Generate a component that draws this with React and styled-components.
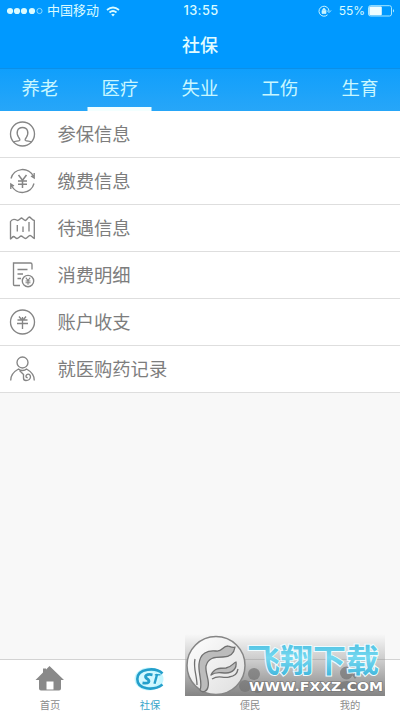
import React from "react";
import styled, { createGlobalStyle } from "styled-components";

const Global = createGlobalStyle`
  * { box-sizing: border-box; }
  body { margin: 0; background: #f8f8f8; font-family: "Liberation Sans", "Noto Sans CJK SC", sans-serif; }
`;
const Screen = styled.div`
  position: relative;
  width: 400px;
  height: 712px;
  display: flex;
  flex-direction: column;
  overflow: hidden;
  background: #f8f8f8;
`;
const Header = styled.header`
  height: 68px;
  background: #0099ff;
  color: #d9fbff;
`;
const StatusBar = styled.div`
  height: 22px;
  display: grid;
  grid-template-columns: 1fr auto 1fr;
  align-items: center;
  padding: 0 5px 0 7px;
  font-size: 12.5px;
  line-height: 22px;
`;
const Carrier = styled.div`
  display: flex;
  align-items: center;
  svg { display: block; }
  span { margin: 0 7px 0 4px; font-size: 13px; }
`;
const Clock = styled.div`
  font: 500 12.8px/22px Inter, sans-serif;
  letter-spacing: 0.4px;
`;
const Power = styled.div`
  display: flex;
  align-items: center;
  justify-content: flex-end;
  font: 400 12px/22px Inter, sans-serif;
  svg { display: block; }
  span { margin: 0 3px 0 7px; }
`;
const Title = styled.h1`
  margin: 0;
  height: 46px;
  text-align: center;
  font-size: 18px;
  font-weight: 500;
  line-height: 48px;
  color: #e2fcff;
`;
const Tabs = styled.nav`
  display: grid;
  grid-template-columns: repeat(5, 1fr);
  height: 43px;
  border-top: 1px solid #0b8fe8;
  background: linear-gradient(#109ffc, #27a6f8);
`;
const Tab = styled.div`
  display: flex;
  justify-content: center;
  color: #c9f7ff;
  font-size: 18.4px;
  line-height: 40px;
  &::after {
    content: "";
    align-self: flex-end;
    width: 64px;
    height: 4px;
    margin-left: -64px;
    transform: translateX(13.5px);
    background: ${(p) => (p.$active ? "#f2ffff" : "transparent")};
  }
`;
const List = styled.main`
  flex: 1;
`;
const Row = styled.div`
  height: 47px;
  display: flex;
  align-items: center;
  gap: 21.500px;
  padding-left: 9px;
  background: #fff;
  border-bottom: 1px solid #dedede;
  font-size: 18.3px;
  line-height: 46px;
  color: #7d7d7d;
  svg { width: 27px; height: 28px; flex: none; fill: none; stroke: #858585; stroke-width: 1.35; }
`;
const RowLabel = styled.span`
  padding-top: 1px;
`;
const Footer = styled.footer`
  height: 53px;
  display: grid;
  grid-template-columns: repeat(4, 1fr);
  border-top: 1px solid #d3d3d3;
  background: #fff;
`;
const NavItem = styled.div`
  display: flex;
  flex-direction: column;
  align-items: center;
  padding-top: 5px;
  font-size: 10.3px;
  line-height: 17px;
  color: ${(p) => (p.$active ? "#38a5c9" : "#8c8c8c")};
  svg { width: 32px; height: 32px; flex: none; overflow: visible; }
`;
const Watermark = styled.div`
  position: absolute;
  left: 185px;
  top: 634px;
  width: 200px;
  height: 62px;
  background: linear-gradient(rgba(180,180,180,0), rgba(150,150,150,.5) 45%, rgba(118,118,118,.9));
  svg { display: block; overflow: visible; }
`;

const Yen = ({ x = 13.5, y = 14, s = 1 }) => (
  <g transform={`translate(${x} ${y}) scale(${s})`}>
    <path d="M-4-6 0-.8 4-6M0-.8V7M-4.5 0h9M-4.5 3.2h9" />
  </g>
);
const icons = {
  person: (
    <svg viewBox="0 0 27 28">
      <circle cx="13.5" cy="14" r="12" />
      <path d="M4.500 22c1.500-1 4.500-.7 6-1.500.8-.5.2-1.600-.8-3-3-4.500-1.500-10 3.800-10s6.800 5.500 3.800 10c-1 1.400-1.600 2.500-.8 3 1.500.8 4.500.5 6 1.500" />
    </svg>
  ),
  cycle: (
    <svg viewBox="0 0 27 28">
      <path d="M2 11.500A12 12 0 0 1 24.500 9.500M25 16.500A12 12 0 0 1 2.500 18.500M25.200 6v5l-3.200-2M1.800 22v-5l3.200 2" />
      <g strokeWidth="1.500"><Yen /></g>
    </svg>
  ),
  map: (
    <svg viewBox="0 0 27 28">
      <path strokeLinejoin="round" d="M1.500 7.500C3 5 5 4.500 8.500 6.500 10 6.500 11 4.500 12.500 4 14 4.500 15 6.500 16.500 6.500 18 6 19 3 20.500 3 22 3.500 23 6 25.300 6.500V24.500C23.500 23.500 22.500 21.500 21 21.500 19.500 21.500 18 24.500 16.500 24.500 15 24.500 13.500 22 12 22 10.500 22.500 9.500 24.500 8 24.500 6.500 24.500 6 22.500 4.500 22.500 3 23 2.500 24.500 1.500 25ZM8.300 11v6.500M14 12.500v5.500M20 8v9.500" />
    </svg>
  ),
  bill: (
    <svg viewBox="0 0 27 28">
      <path d="M23 8.500V3.500q0-1.500-1.500-1.500H4.500V23.500q0 1 1 1H11M8.500 8.500H18.500M8.500 13H14M8.500 17.500H12" />
      <circle cx="19" cy="20" r="5.700" />
      <g strokeWidth="2"><Yen x={19} y={20} s={0.55} /></g>
    </svg>
  ),
  coin: (
    <svg viewBox="0 0 27 28">
      <circle cx="13.500" cy="14" r="12" />
      <path d="M10 8.500 12.500 11.500M17 8.500 14.500 11.500M13.500 9V21M8.500 12H18.500M8 15.500H19" />
    </svg>
  ),
  doctor: (
    <svg viewBox="0 0 27 28">
      <circle cx="13.500" cy="7.500" r="5.500" />
      <path d="M1.700 25.500C1.500 19.500 5 16.500 9.500 14c2 2 6 2 8 0 4.500 2.500 8 5.500 7.800 11.500M10.500 15.500l4 4M14.500 19v4q0 2.500 2.500 2.500 4 0 4.500-3.500c0-2.500-2.300-3.500-3.800-2.300-1.600 1.500-.4 3.300 1 2.800" />
    </svg>
  ),
};
const rows = [
  ["person", "参保信息"], ["cycle", "缴费信息"], ["map", "待遇信息"],
  ["bill", "消费明细"], ["coin", "账户收支"], ["doctor", "就医购药记录"],
];

const Signal = () => (
  <svg width="36" height="8" fill="#d9fbff">
    {[3, 10, 17, 25].map((x) => <circle key={x} cx={x} cy="4" r="3.100" />)}
    <circle cx="32.500" cy="4" r="2.600" fill="none" stroke="#a9e8ff" strokeWidth=".8" />
  </svg>
);
const Wifi = () => (
  <svg width="14" height="11" viewBox="0 0 14 11" fill="none" stroke="#d9fbff" strokeWidth="1.700">
    <path d="M1 4Q7-1 13 4M3.500 6.500Q7 3.500 10.500 6.500" />
    <path d="M5.200 8.500Q7 7 8.800 8.500L7 10.500Z" fill="#d9fbff" stroke="none" />
  </svg>
);
const Lock = () => (
  <svg width="14" height="12" viewBox="0 0 14 12" fill="none" stroke="#c7f4ff">
    <path d="M9.500 9.800A5 5 0 1 1 11 6M9 5.500l2 2 2-2" />
    <path d="M4 5.500h4v3H4zM4.800 5V4Q6 2.500 7.200 4V5" fill="#c7f4ff" strokeWidth=".7" />
  </svg>
);
const Battery = () => (
  <svg width="27" height="12" viewBox="0 0 27 12">
    <rect x=".5" y=".7" width="23" height="10.300" rx="2" fill="none" stroke="#a9e8ff" />
    <rect x="1.300" y="1.500" width="12.500" height="8.700" rx="1" fill="#effdff" />
    <path d="M25 4q2 1.800 0 3.600Z" fill="#b9efff" />
  </svg>
);
const Home = () => (
  <svg viewBox="0 0 32 32" fill="#898989">
    <path d="M15.500 1 30 15H27V23.500q0 2-2 2H7q-2 0-2-2V15H1.500L9 7.500V3.500h3v1Z" />
    <path d="M12.500 16.500h7V24.500h-7z" fill="#fff" />
  </svg>
);
const Social = () => (
  <svg viewBox="0 0 32 32" fill="none" stroke="#249fcb">
    <ellipse cx="15" cy="14" rx="12.500" ry="9.500" fill="#d3f8ff" stroke="#c4f6ff" strokeWidth="4" />
    <path d="M28.500 8.500C22 2 3.300 3 3.300 14S20 26 28.500 19.500" strokeWidth="2.600" />
    <path d="M18.500 9.800C12.500 8.500 9.500 11.500 13 13.700s2.500 5.300-4.500 4.200" strokeWidth="2.800" />
    <path d="M23.200 9 20.500 18.800" strokeWidth="2.400" />
    <path d="M20.800 9.800H26.500" strokeWidth="1.300" />
  </svg>
);
const Service = () => (
  <svg viewBox="0 0 32 32" fill="#858585">
    <circle cx="20" cy="9" r="6" /><circle cx="11" cy="21" r="6" /><circle cx="24" cy="22" r="6" />
  </svg>
);
const Mine = () => (
  <svg viewBox="0 0 32 32" fill="#858585">
    <circle cx="12.500" cy="8" r="6.500" /><path d="M2 24Q4 16 13 16T24 24ZM18 10l7-6 2 2-6 8Z" />
  </svg>
);

export default function App() {
  return (
    <>
      <Global />
      <Screen>
        <Header>
          <StatusBar>
            <Carrier><Signal /><span>中国移动</span><Wifi /></Carrier>
            <Clock>13:55</Clock>
            <Power><Lock /><span>55%</span><Battery /></Power>
          </StatusBar>
          <Title>社保</Title>
        </Header>
        <Tabs>
          {["养老", "医疗", "失业", "工伤", "生育"].map((t) => (
            <Tab key={t} $active={t === "医疗"}>{t}</Tab>
          ))}
        </Tabs>
        <List>
          {rows.map(([icon, label]) => (
            <Row key={icon}>{icons[icon]}<RowLabel>{label}</RowLabel></Row>
          ))}
        </List>
        <Footer>
          <NavItem><Home />首页</NavItem>
          <NavItem $active><Social />社保</NavItem>
          <NavItem><Service />便民</NavItem>
          <NavItem><Mine />我的</NavItem>
        </Footer>
        <Watermark>
          <svg width="200" height="62" viewBox="0 0 200 62">
            <defs>
              <linearGradient id="sky" x2="0" y2="1">
                <stop stopColor="#39b4da" /><stop offset=".5" stopColor="#75d8f0" /><stop offset="1" stopColor="#35afd8" />
              </linearGradient>
              <linearGradient id="disc" x2="1" y2="1">
                <stop stopColor="#fff" /><stop offset="1" stopColor="#dedede" />
              </linearGradient>
            </defs>
            <circle cx="31" cy="31.500" r="29" fill="url(#disc)" stroke="#858585" strokeWidth="1.500" />
            <g fill="#bcbcbc" stroke="#707070" strokeWidth="1.300" strokeLinejoin="round">
              <path d="M15 56C18 49 13 39 14 30 15 19 23 16 31 17 38 18 37 12 43 12 46 13 48 14 50 13 49 20 44 23 38 23 29 23 23 24 21 32 20 39 25 47 23 53 22 58 17 59 15 56Z" />
              <path d="M26 41C29 34 35 34 41 34 47 33 48 29 51 28 52 34 48 39 41 39 35 39 31 37 26 41Z" />
              <path d="M12 51C12 42 8 34 10 25M27 45C35 40 37 45 44 43 50 42 52 40 53 35" fill="none" />
            </g>
            <text x="62" y="37.500" textLength="132" lengthAdjust="spacingAndGlyphs" fontFamily="Noto Sans CJK SC, sans-serif" fontWeight="700" fontSize="32" fill="url(#sky)" stroke="#effcff" strokeWidth="2" paintOrder="stroke">飞翔下载</text>
            <text x="64" y="57" textLength="134" lengthAdjust="spacingAndGlyphs" fontFamily="DejaVu Sans, sans-serif" fontWeight="700" fontSize="11.500" fill="#fff" stroke="#747474" strokeWidth="1.200" paintOrder="stroke">WWW.FXXZ.COM</text>
          </svg>
        </Watermark>
      </Screen>
    </>
  );
}
